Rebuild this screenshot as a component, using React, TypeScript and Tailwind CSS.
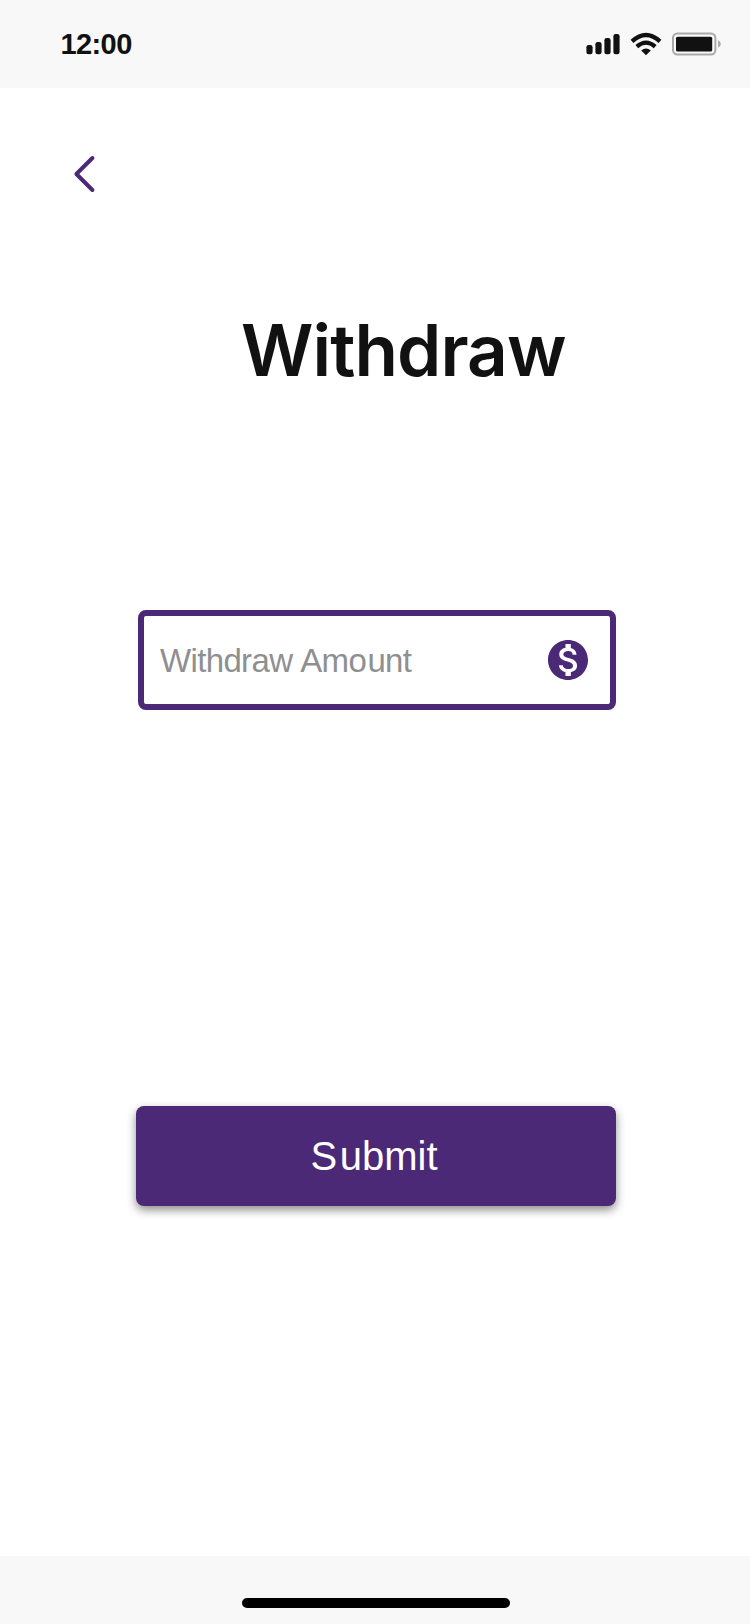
import { MdMonetizationOn } from "react-icons/md";

function StatusBar() {
  return (
    <header className="flex h-[88px] items-start justify-between bg-[#f8f8f8] pt-[28px] pl-[60.5px] pr-[29px] text-[#111111]">
      <span className="font-['Liberation_Sans',Arial,sans-serif] text-[29px] leading-8 font-bold tracking-[-0.6px]">12:00</span>
      <svg className="h-8 w-[136px]" viewBox="585 28 136 32" fill="none">
        <g fill="#111111">
          <rect x="586.4" y="45" width="6.2" height="9.2" rx="2.2" />
          <rect x="595.4" y="42" width="6.2" height="12.2" rx="2.2" />
          <rect x="604.4" y="38" width="6.2" height="16.2" rx="2.2" />
          <rect x="613.4" y="34" width="6.2" height="20.2" rx="2.2" />
          <path d="M641.2 50.6Q646 46.6 650.8 50.6L646 55.2Z" />
        </g>
        <g stroke="#111111" strokeWidth="4.2">
          <path d="M632 41.4Q646 28.6 660 41.4" />
          <path d="M636.8 46.6Q646 38.6 655.2 46.6" />
        </g>
        <rect x="673" y="33.5" width="42.4" height="21" rx="4.5" stroke="#a9a9a9" strokeWidth="2" />
        <rect x="676" y="36.7" width="36.2" height="14.8" rx="1.6" fill="#111111" />
        <path d="M718 40.2Q720.8 41.4 720.8 44T718 47.8Z" fill="#a9a9a9" />
      </svg>
    </header>
  );
}

export default function App() {
  return (
    <div className="flex h-[1624px] w-[750px] flex-col bg-white font-['Liberation_Sans',Arial,sans-serif]">
      <StatusBar />
      <main className="flex grow flex-col">
        <button aria-label="Back" className="mt-[66px] ml-[70px] h-10 w-7">
          <svg className="h-10 w-7" viewBox="0 0 28 40" fill="none" stroke="#4b2976" strokeWidth="4" strokeLinecap="round" strokeLinejoin="round">
            <path d="M22.4 4L6.4 20L22.4 36" />
          </svg>
        </button>
        <h1 className="mt-[112px] ml-[241px] h-[88px] font-['Inter',sans-serif] text-[71px] leading-[88px] font-semibold tracking-[-0.9px] whitespace-nowrap text-[#111111]">Withdraw</h1>
        <div className="mt-[216px] ml-[138px] flex h-[100px] w-[478px] items-center justify-between rounded-lg border-6 border-[#4b2976] pr-[18px] pl-4">
          <span className="pt-0.5 text-[33px] leading-9 tracking-[-0.65px] [word-spacing:1.2px] whitespace-nowrap text-[#8f8f92]">
            Withdraw Am<span className="tracking-[0.6px]">o</span>unt
          </span>
          <MdMonetizationOn className="size-12 text-[#4b2976]" />
        </div>
        <button className="mt-[396px] ml-[136px] flex h-[100px] w-[480px] items-center gap-[2.5px] rounded-lg bg-[#4b2976] pl-[174.5px] text-[40px] leading-none text-white shadow-[0_4px_10px_rgba(0,0,0,0.45)]">
          <span>S</span>
          <span>ubmit</span>
        </button>
      </main>
      <footer className="flex h-[68px] items-start bg-[#f8f8f8] pt-[42px] pl-[242px]">
        <div className="h-[10px] w-[268px] rounded-full bg-black" />
      </footer>
    </div>
  );
}
